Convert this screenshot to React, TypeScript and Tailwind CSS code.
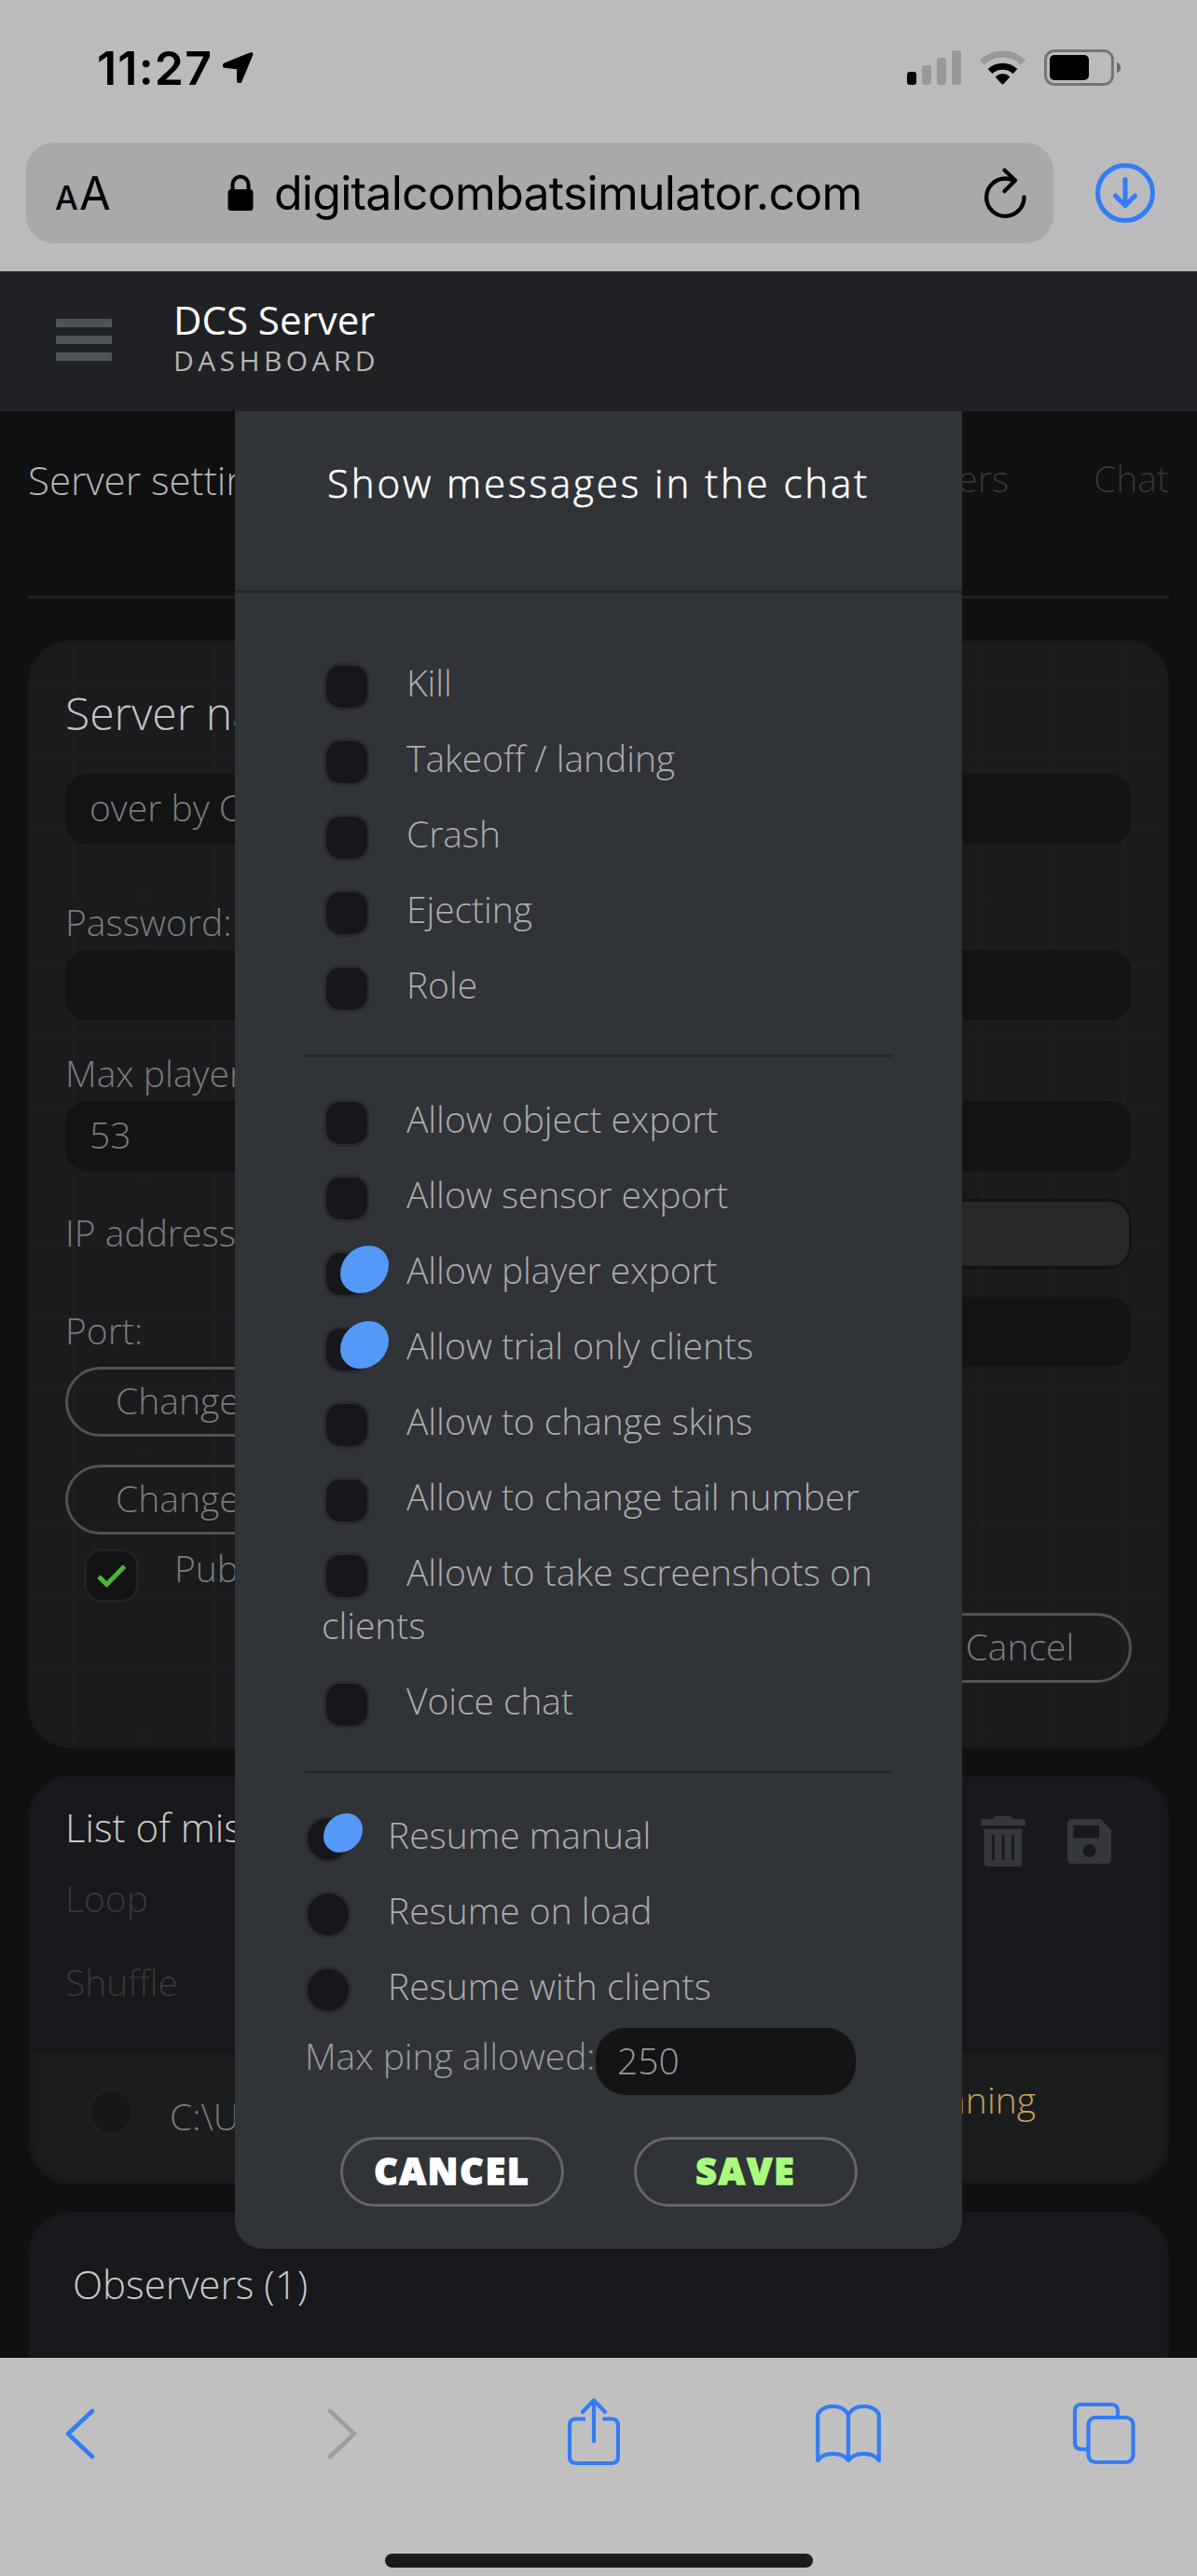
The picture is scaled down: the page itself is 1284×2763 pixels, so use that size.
import React, { useState } from "react";

interface Option {
  label: string;
  checked: boolean;
}

const chatOptions: Option[] = [
  { label: "Kill", checked: false },
  { label: "Takeoff / landing", checked: false },
  { label: "Crash", checked: false },
  { label: "Ejecting", checked: false },
  { label: "Role", checked: false },
];

const serverOptions: Option[] = [
  { label: "Allow object export", checked: false },
  { label: "Allow sensor export", checked: false },
  { label: "Allow player export", checked: true },
  { label: "Allow trial only clients", checked: true },
  { label: "Allow to change skins", checked: false },
  { label: "Allow to change tail number", checked: false },
  { label: "Allow to take screenshots on clients", checked: false },
  { label: "Voice chat", checked: false },
];

const resumeModes = ["Resume manual", "Resume on load", "Resume with clients"];

const StatusBar: React.FC = () => (
  <div className="flex h-[153px] items-start pl-[104px]">
    <span className="mt-[43px] w-[123px] font-[Inter] text-[50px] leading-[60px] font-semibold tracking-[1.2px] whitespace-nowrap text-black">
      11:27
    </span>
    <svg className="mt-[55px] ml-[11px]" width="35" height="35" viewBox="0 0 35 35">
      <path
        d="M31.500 3 3 14.500V15.800L18 17.500V32H19.500Z"
        fill="#000"
        stroke="#000"
        strokeWidth="4"
        strokeLinejoin="round"
      />
    </svg>
    <div className="mt-[54px] ml-[700px] flex h-[37px] items-end gap-[6px]">
      <i className="h-[14px] w-[10px] rounded-[3px] bg-black" />
      <i className="h-[21px] w-[10px] rounded-[3px] bg-[#989898]" />
      <i className="h-[29px] w-[10px] rounded-[3px] bg-[#989898]" />
      <i className="h-[37px] w-[10px] rounded-[3px] bg-[#989898]" />
    </div>
    <svg className="mt-[53px] ml-[19px]" width="51" height="39" viewBox="0 0 51 39">
      <path d="M3.500 14A31.500 31.500 0 0 1 47.500 14" fill="none" stroke="#989898" strokeWidth="7" />
      <path d="M12 23.500A20 20 0 0 1 39 23.500" fill="none" stroke="#000" strokeWidth="7" />
      <path
        d="M19 29.500A10 10 0 0 1 32 29.500L25.500 36.500Z"
        fill="#000"
        stroke="#000"
        strokeWidth="2"
        strokeLinejoin="round"
      />
    </svg>
    <svg className="mt-[53px] ml-[19px]" width="83" height="39" viewBox="0 0 83 39">
      <rect x="1.500" y="1.500" width="72" height="36" rx="9.500" fill="none" stroke="#757575" strokeWidth="3" />
      <rect x="6" y="6" width="42" height="27" rx="5" fill="#000" />
      <path d="M78 13.500c5.500 2.500 5.500 9.500 0 12z" fill="#6b6b6b" />
    </svg>
  </div>
);

const AddressBar: React.FC = () => (
  <div className="flex items-start pl-[28px] text-black">
    <div className="flex h-[108px] w-[1102px] items-start rounded-[30px] bg-[#a9a9a9] font-[Inter] whitespace-nowrap">
      <div className="mt-[20px] ml-[31px] flex w-[61px] items-baseline leading-[70px]">
        <span className="w-[26px] text-[35px] font-medium">A</span>
        <span className="text-[49px]">A</span>
      </div>
      <svg className="mt-[34px] ml-[124px]" width="28" height="40" viewBox="0 0 28 40">
        <rect x="0.500" y="16" width="27" height="23" rx="3.500" fill="#000" />
        <path d="M5.500 18V11a8.500 8.500 0 0 1 17 0v7" fill="none" stroke="#000" strokeWidth="4" />
      </svg>
      <span className="mt-[19px] ml-[22px] w-[741px] text-[50px] leading-[70px] tracking-[-0.75px]">
        digitalcombatsimulator.com
      </span>
      <svg
        className="mt-[26px] ml-[19px]"
        width="50"
        height="58"
        viewBox="0 0 50 58"
        fill="none"
        stroke="#000"
        strokeWidth="4.300"
        strokeLinecap="round"
      >
        <path d="M44.500 32.500A20.200 20.200 0 1 1 24.300 12.500Q29 12.500 34 14.500" />
        <path d="M23.500 3.500 35 14.500 23.500 26" strokeLinejoin="round" />
      </svg>
    </div>
    <svg
      className="mt-[20px] ml-[44px]"
      width="66"
      height="68"
      viewBox="0 0 66 68"
      fill="none"
      stroke="#337cf6"
      strokeWidth="5"
      strokeLinecap="round"
      strokeLinejoin="round"
    >
      <circle cx="33" cy="34" r="29.500" />
      <path d="M33 19.500v28M22.500 37 33 47.500 43.500 37" />
    </svg>
  </div>
);

const Toggle: React.FC<{ checked: boolean; onClick: () => void; round?: boolean }> = ({
  checked,
  onClick,
  round = false,
}) => (
  <button
    type="button"
    onClick={onClick}
    className={
      round
        ? "relative float-left mt-[8px] mr-[39px] mb-[-10px] h-[51px] w-[50px] rounded-full border-3 border-[#2a2b30] bg-[#16171a]"
        : "relative float-left mt-[8px] mr-[39px] mb-[-10px] ml-[2px] h-[51px] w-[50px] rounded-[18px] border-3 border-[#2a2b30] bg-[#16171a]"
    }
  >
    {checked && (
      <i
        className={
          round
            ? "absolute top-[-5px] left-[17px] h-[42px] w-[42px] rounded-[60%_40%] bg-[#5499f7]"
            : "absolute top-[-8px] left-[15px] h-[51px] w-[52px] rounded-[60%_40%] bg-[#5499f7]"
        }
      />
    )}
  </button>
);

const OptionList: React.FC<{ initial: Option[] }> = ({ initial }) => {
  const [options, setOptions] = useState(initial);

  const toggle = (index: number) =>
    setOptions(options.map((o, i) => (i === index ? { ...o, checked: !o.checked } : o)));

  return (
    <div className="pl-[18px] tracking-[-0.06px]">
      {options.map((option, i) => (
        <div key={option.label} className="mb-[24px] leading-[57px]">
          <Toggle checked={option.checked} onClick={() => toggle(i)} />
          {option.label}
        </div>
      ))}
    </div>
  );
};

const SettingsModal: React.FC = () => {
  const [resume, setResume] = useState(0);

  return (
    <div className="absolute top-[150px] left-[252px] h-[1971px] w-[780px] rounded-b-[30px] bg-[#303338] text-[39px] font-light text-[#acacac]">
      <h2 className="h-[195px] border-b-3 border-[#25282b] pt-[48px] text-center text-[42px] leading-[57px] font-light tracking-[2.9px] whitespace-nowrap text-white [-webkit-text-stroke:0.6px_currentColor]">
        Show messages in the chat
      </h2>
      <div className="px-[75px] pt-[67px]">
        <OptionList initial={chatOptions} />
        <hr className="mt-[47px] mb-[37px] border-t-3 border-[#25282b]" />
        <OptionList initial={serverOptions} />
        <hr className="mt-[47px] mb-[37px] border-t-3 border-[#25282b]" />
        {resumeModes.map((mode, i) => (
          <div key={mode} className="mb-[24px] leading-[57px]">
            <Toggle round checked={resume === i} onClick={() => setResume(i)} />
            {mode}
          </div>
        ))}
        <div className="mt-[-7px] flex text-[#999]">
          <span className="mt-[1px] w-[312px] leading-[57px] tracking-[-0.06px] whitespace-nowrap">Max ping allowed:</span>
          <span className="h-[72px] w-[279px] rounded-[32px] bg-[#131416] pl-[23px] leading-[70px]">
            250
          </span>
        </div>
        <div className="mt-[45px] flex gap-[75px] pl-[38px] text-center font-extrabold tracking-[2px] [-webkit-text-stroke:1.4px_currentColor]">
          <button
            type="button"
            className="h-[75px] w-[240px] rounded-full border-3 border-[#656565] pb-[3px] leading-[66px] text-white"
          >
            CANCEL
          </button>
          <button
            type="button"
            className="h-[75px] w-[240px] rounded-full border-3 border-[#656565] pb-[3px] leading-[66px] text-[#a8fb7d]"
          >
            SAVE
          </button>
        </div>
      </div>
    </div>
  );
};

const SettingsCard: React.FC = () => (
  <section className="h-[1188px] rounded-[45px] border-3 border-[#18191b] bg-[#1a1b1d] bg-[linear-gradient(#1b1d20_3px,transparent_3px),linear-gradient(90deg,#1b1d20_3px,transparent_3px)] bg-[size:75px_75px] bg-[position:45px_45px] px-[37px] pt-[45px]">
    <h2 className="text-[48px] leading-[60px] text-[#c4c4c4]">Server name</h2>
    <div className="mt-[35px] h-[75px] rounded-[24px] bg-[#121315] pl-[26px] leading-[72px]">
      over by C
    </div>
    <div className="mt-[55px] leading-[57px]">Password:</div>
    <div className="mt-[2px] h-[75px] rounded-[24px] bg-[#121315]" />
    <div className="mt-[28px] leading-[57px]">Max players:</div>
    <div className="mt-[2px] h-[75px] rounded-[24px] bg-[#121315] pl-[26px] leading-[72px]">53</div>
    <div className="mt-[30px] flex h-[75px] justify-between">
      <span className="mt-[7px] leading-[57px]">IP address:</span>
      <span className="w-[700px] rounded-[24px] border-3 border-[#121315] bg-[#282828]" />
    </div>
    <div className="mt-[30px] flex h-[75px] justify-between">
      <span className="mt-[7px] leading-[57px]">Port:</span>
      <span className="w-[700px] rounded-[24px] bg-[#121315]" />
    </div>
    <div className="h-[75px] w-[320px] rounded-full border-3 border-[#525252] pl-[51px] leading-[66px]">
      Change
    </div>
    <div className="mt-[30px] h-[75px] w-[320px] rounded-full border-3 border-[#525252] pl-[51px] leading-[66px]">
      Change
    </div>
    <div className="mt-[15px] flex h-[58px] pl-[20px]">
      <span className="flex h-[58px] w-[59px] items-center justify-center rounded-[19px] border-3 border-[#202225] bg-[#111214]">
        <svg width="32" height="27" viewBox="0 0 32 27" fill="none" stroke="#4bb534" strokeWidth="5">
          <path d="M2 14 10.500 22.500 29.500 3" />
        </svg>
      </span>
      <span className="mt-[-8px] ml-[38px] leading-[57px]">Public</span>
    </div>
    <div className="mt-[11px] ml-auto h-[75px] w-[231px] rounded-full border-3 border-[#525252] pr-[9px] text-center leading-[66px]">
      Cancel
    </div>
  </section>
);

const MissionsCard: React.FC = () => (
  <section className="mt-[30px] h-[438px] overflow-hidden rounded-[45px] border-3 border-[#16171a] bg-[#18191c]">
    <div className="flex h-[80px] px-[37px] pt-[23px]">
      <h3 className="text-[42px] leading-[57px] whitespace-nowrap text-[#cacaca]">List of missions</h3>
      <svg className="mt-[17px] ml-auto" width="48" height="54" viewBox="0 0 48 54">
        <path
          fill="#34373b"
          fillRule="evenodd"
          d="M16 0h16l3 3h11q2 0 2 2v5H0V5q0-2 2-2h11zM3.500 13.500h41V50q0 4-4 4h-33q-4 0-4-4zM12 21.500V46q0 1 1.500 1T15 46V21.500Q15 20 13.500 20T12 21.500zM22.500 21.500V46q0 1 1.500 1t1.500-1V21.500Q25.500 20 24 20t-1.500 1.500zM33 21.500V46q0 1 1.500 1t1.500-1V21.500Q36 20 34.500 20T33 21.500z"
        />
      </svg>
      <svg className="mt-[20px] mr-[22px] ml-[45px]" width="47" height="48" viewBox="0 0 47 48">
        <path
          fill="#34373b"
          fillRule="evenodd"
          d="M5 0h30.500L47 11.500V43q0 5-5 5H5q-5 0-5-5V5q0-5 5-5zM6.500 7v13.500H34V7zM23.500 27a7 7 0 1 0 .01 0z"
        />
      </svg>
    </div>
    <div className="mt-[19px] pl-[37px] leading-[57px] text-[#36393d]">Loop</div>
    <div className="mt-[33px] pl-[37px] leading-[57px] text-[#36393d]">Shuffle</div>
    <div className="mx-[3px] mt-[42px] flex h-[141px] rounded-b-[40px] border-t-6 border-[#151619] bg-[#1b1c1e] pl-[59px] leading-[57px]">
      <i className="mt-[38px] h-[50px] w-[49px] rounded-full border-3 border-[#1d1e22] bg-[#151618]" />
      <span className="mt-[39px] ml-[38px]">C:\Users</span>
      <span className="mt-[21px] mr-[137px] ml-auto text-[#c2a052]">Running</span>
    </div>
  </section>
);

const BrowserToolbar: React.FC = () => (
  <div className="h-[234px] bg-[#c0c0c1]">
    <div className="flex h-[210px] items-start pl-[69px] text-[#337cf6]">
      <svg className="mt-[53px]" width="34" height="56" viewBox="0 0 34 56" fill="none" stroke="currentColor" strokeWidth="4.500" strokeLinecap="round" strokeLinejoin="round">
        <path d="M30 4 4 28.500 30 53" />
      </svg>
      <svg className="mt-[53px] ml-[247px]" width="34" height="56" viewBox="0 0 34 56" fill="none" stroke="#9d9d9e" strokeWidth="4.500" strokeLinecap="round" strokeLinejoin="round">
        <path d="M4 4 30 28.500 4 53" />
      </svg>
      <svg className="mt-[42px] ml-[225px]" width="56" height="74" viewBox="0 0 56 74" fill="none" stroke="currentColor" strokeWidth="4.200" strokeLinejoin="round">
        <path d="M19 23.500H9q-7 0-7 7V64q0 7 7 7h38q7 0 7-7V30.500q0-7-7-7H37.500" />
        <path d="M28 4v43.500M16 16 28 3.500 40 16" strokeLinecap="round" />
      </svg>
      <svg className="mt-[50px] ml-[210px]" width="70" height="64" viewBox="0 0 70 64" fill="none" stroke="currentColor" strokeWidth="4.200" strokeLinejoin="round" strokeLinecap="round">
        <path d="M35 11C28-1 9-1 2.200 10.500V60C9 50.500 28 50.500 35 60C42 50.500 61 50.500 67.800 60V10.500C61-1 42-1 35 11V60" />
      </svg>
      <svg className="mt-[47px] ml-[205px]" width="68" height="68" viewBox="0 0 68 68" fill="none" stroke="currentColor" strokeWidth="4.200">
        <path d="M49 16V10q0-7-7-7H10q-7 0-7 7v34q0 7 7 7h7" />
        <rect x="17.500" y="17" width="48" height="48" rx="7.500" />
      </svg>
    </div>
    <div className="mx-auto h-[15px] w-[459px] rounded-full bg-[#1b1b1b]" />
  </div>
);

export default function App() {
  return (
    <div className="flex h-[2763px] w-[1284px] flex-col overflow-hidden bg-[#bbbbbd]">
      <div className="h-[291px]">
        <StatusBar />
        <AddressBar />
      </div>
      <main className="relative h-[2238px] overflow-hidden bg-[#0f1012] font-['Open_Sans',sans-serif] text-[39px] font-light text-[#7b7b7b]">
        <header className="flex h-[150px] items-start bg-[#202124] pl-[60px]">
          <div className="mt-[51px] flex w-[60px] flex-col gap-[9px]">
            <i className="h-[9px] bg-[#4c535b]" />
            <i className="h-[9px] bg-[#4c535b]" />
            <i className="h-[9px] bg-[#4c535b]" />
          </div>
          <div className="mt-[27px] ml-[66px] whitespace-nowrap">
            <div className="text-[42px] leading-[50px] font-normal text-white">DCS Server</div>
            <div className="text-[30px] leading-[37px] font-normal tracking-[4.4px] text-[#b5b5b5]">DASHBOARD</div>
          </div>
        </header>
        <div className="px-[30px]">
          <nav className="flex h-[201px] items-start border-b-3 border-[#202124] pt-[43px] leading-[57px] text-[#35363a]">
            <span className="mt-[2px] text-[42px] text-[#b4b4b4]">Server settings</span>
            <span className="ml-auto">Players</span>
            <span className="ml-[91px]">Chat</span>
          </nav>
          <div className="mt-[45px]">
            <SettingsCard />
            <MissionsCard />
            <section className="mt-[30px] h-[240px] rounded-t-[45px] border-3 border-[#16171a] bg-[#18191c] pt-[45px] pl-[45px] text-[42px] leading-[57px] text-[#cacaca]">
              Observers (1)
            </section>
          </div>
        </div>
        <SettingsModal />
      </main>
      <BrowserToolbar />
    </div>
  );
}
